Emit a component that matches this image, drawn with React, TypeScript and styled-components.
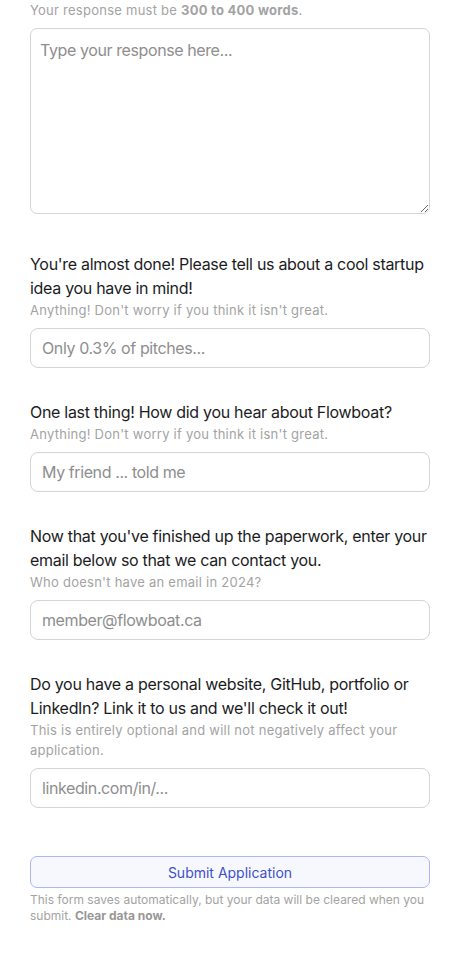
import styled, { createGlobalStyle } from 'styled-components'

const GlobalStyle = createGlobalStyle`
  html, body {
    margin: 0;
    padding: 0;
    background: #ffffff;
  }
  body {
    font-family: Inter, "Noto Sans", "Liberation Sans", sans-serif;
    color: #1c1c1e;
    -webkit-font-smoothing: antialiased;
  }
  * {
    box-sizing: border-box;
  }
`

const Form = styled.form`
  width: 400px;
  margin: 0 30px;
  padding-bottom: 40px;
  display: flex;
  flex-direction: column;
`

const Field = styled.div`
  display: flex;
  flex-direction: column;
  margin-bottom: 32px;
`

const Question = styled.label`
  font-size: 16px;
  line-height: 24px;
  color: #1c1c1e;
  letter-spacing: -0.3px;
`

const Hint = styled.div`
  font-size: 13px;
  line-height: 20px;
  color: #a3a3a3;
  letter-spacing: 0.25px;
  margin-bottom: 8px;

  b {
    font-weight: 700;
  }
`

const TextArea = styled.textarea`
  display: block;
  width: 100%;
  height: 186px;
  padding: 11px 9px;
  border: 1px solid #d4d4d4;
  border-radius: 7px;
  font-family: inherit;
  font-size: 16px;
  line-height: 20px;
  letter-spacing: -0.4px;
  color: #1c1c1e;
  outline: none;
  margin-bottom: 6px;

  &::placeholder {
    color: #8e8e8e;
  }
`

const Input = styled.input`
  display: block;
  width: 100%;
  height: 40px;
  padding: 0 11px;
  border: 1px solid #d4d4d4;
  border-radius: 8px;
  font-family: inherit;
  font-size: 16px;
  letter-spacing: -0.4px;
  color: #1c1c1e;
  outline: none;

  &::placeholder {
    color: #8e8e8e;
  }
`

const SubmitButton = styled.button`
  margin-top: 16px;
  width: 100%;
  height: 32px;
  border: 1px solid #aab8f5;
  border-radius: 7px;
  background: #f7f8fe;
  color: #3f51c9;
  font-family: inherit;
  font-size: 14px;
  cursor: pointer;
`

const Footnote = styled.p`
  margin: 4px 0 0;
  font-size: 12px;
  line-height: 16px;
  color: #a3a3a3;

  b {
    font-weight: 700;
    color: #979797;
    cursor: pointer;
  }
`

const questions = [
  {
    label: "You're almost done! Please tell us about a cool startup idea you have in mind!",
    hint: "Anything! Don't worry if you think it isn't great.",
    placeholder: 'Only 0.3% of pitches...',
  },
  {
    label: 'One last thing! How did you hear about Flowboat?',
    hint: "Anything! Don't worry if you think it isn't great.",
    placeholder: 'My friend ... told me',
  },
  {
    label: "Now that you've finished up the paperwork, enter your email below so that we can contact you.",
    hint: "Who doesn't have an email in 2024?",
    placeholder: 'member@flowboat.ca',
  },
  {
    label: "Do you have a personal website, GitHub, portfolio or LinkedIn? Link it to us and we'll check it out!",
    hint: 'This is entirely optional and will not negatively affect your application.',
    placeholder: 'linkedin.com/in/...',
  },
]

const App = () => {
  return (
    <>
      <GlobalStyle />
      <Form onSubmit={e => e.preventDefault()}>
        <Field>
          <Hint>
            Your response must be <b>300 to 400 words</b>.
          </Hint>
          <TextArea placeholder="Type your response here..." />
        </Field>

        {questions.map((q, index) => (
          <Field key={index}>
            <Question>{q.label}</Question>
            <Hint>{q.hint}</Hint>
            <Input placeholder={q.placeholder} />
          </Field>
        ))}

        <SubmitButton type="submit">Submit Application</SubmitButton>
        <Footnote>
          This form saves automatically, but your data will be cleared when you
          submit. <b>Clear data now.</b>
        </Footnote>
      </Form>
    </>
  )
}

export default App
